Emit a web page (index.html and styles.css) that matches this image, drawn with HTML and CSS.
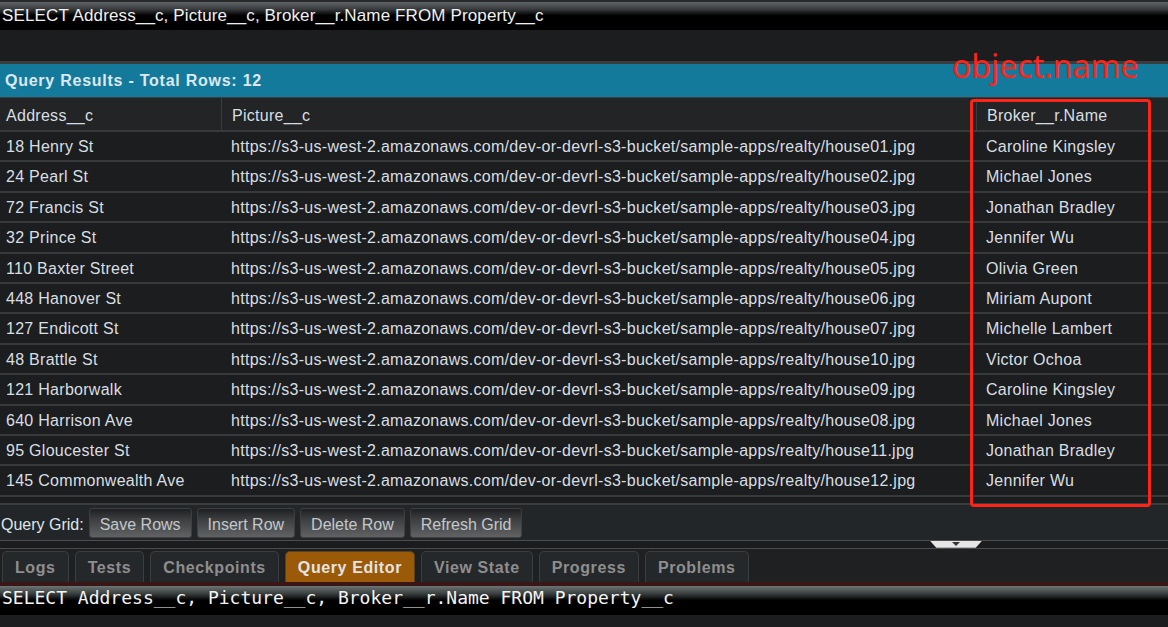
FILE: index.html
```html
<!DOCTYPE html>
<html>
<head>
<meta charset="utf-8">
<link rel="stylesheet" href="styles.css">
</head>
<body>
<div class="page">
  <div class="topquery">SELECT Address__c, Picture__c, Broker__r.Name FROM Property__c</div>
  <div class="blank"></div>
  <div class="title">Query Results - Total Rows: 12</div>
  <div class="grid">
    <div class="row head">
      <div class="c1">Address__c</div>
      <div class="c2">Picture__c</div>
      <div class="c3">Broker__r.Name</div>
    </div>
    <div class="row"><div class="c1">18 Henry St</div><div class="c2">https://s3-us-west-2.amazonaws.com/dev-or-devrl-s3-bucket/sample-apps/realty/house01.jpg</div><div class="c3">Caroline Kingsley</div></div>
    <div class="row"><div class="c1">24 Pearl St</div><div class="c2">https://s3-us-west-2.amazonaws.com/dev-or-devrl-s3-bucket/sample-apps/realty/house02.jpg</div><div class="c3">Michael Jones</div></div>
    <div class="row"><div class="c1">72 Francis St</div><div class="c2">https://s3-us-west-2.amazonaws.com/dev-or-devrl-s3-bucket/sample-apps/realty/house03.jpg</div><div class="c3">Jonathan Bradley</div></div>
    <div class="row"><div class="c1">32 Prince St</div><div class="c2">https://s3-us-west-2.amazonaws.com/dev-or-devrl-s3-bucket/sample-apps/realty/house04.jpg</div><div class="c3">Jennifer Wu</div></div>
    <div class="row"><div class="c1">110 Baxter Street</div><div class="c2">https://s3-us-west-2.amazonaws.com/dev-or-devrl-s3-bucket/sample-apps/realty/house05.jpg</div><div class="c3">Olivia Green</div></div>
    <div class="row"><div class="c1">448 Hanover St</div><div class="c2">https://s3-us-west-2.amazonaws.com/dev-or-devrl-s3-bucket/sample-apps/realty/house06.jpg</div><div class="c3">Miriam Aupont</div></div>
    <div class="row"><div class="c1">127 Endicott St</div><div class="c2">https://s3-us-west-2.amazonaws.com/dev-or-devrl-s3-bucket/sample-apps/realty/house07.jpg</div><div class="c3">Michelle Lambert</div></div>
    <div class="row"><div class="c1">48 Brattle St</div><div class="c2">https://s3-us-west-2.amazonaws.com/dev-or-devrl-s3-bucket/sample-apps/realty/house10.jpg</div><div class="c3">Victor Ochoa</div></div>
    <div class="row"><div class="c1">121 Harborwalk</div><div class="c2">https://s3-us-west-2.amazonaws.com/dev-or-devrl-s3-bucket/sample-apps/realty/house09.jpg</div><div class="c3">Caroline Kingsley</div></div>
    <div class="row"><div class="c1">640 Harrison Ave</div><div class="c2">https://s3-us-west-2.amazonaws.com/dev-or-devrl-s3-bucket/sample-apps/realty/house08.jpg</div><div class="c3">Michael Jones</div></div>
    <div class="row"><div class="c1">95 Gloucester St</div><div class="c2">https://s3-us-west-2.amazonaws.com/dev-or-devrl-s3-bucket/sample-apps/realty/house11.jpg</div><div class="c3">Jonathan Bradley</div></div>
    <div class="row"><div class="c1">145 Commonwealth Ave</div><div class="c2">https://s3-us-west-2.amazonaws.com/dev-or-devrl-s3-bucket/sample-apps/realty/house12.jpg</div><div class="c3">Jennifer Wu</div></div>
  </div>
  <div class="gridgap"></div>
  <div class="toolbar">
    <span class="label">Query Grid:</span>
    <button class="btn">Save Rows</button>
    <button class="btn">Insert Row</button>
    <button class="btn">Delete Row</button>
    <button class="btn">Refresh Grid</button>
  </div>
  <div class="splitter"><div class="handle"><span class="arrow"></span></div></div>
  <div class="tabs">
    <div class="tab">Logs</div>
    <div class="tab">Tests</div>
    <div class="tab">Checkpoints</div>
    <div class="tab active">Query Editor</div>
    <div class="tab">View State</div>
    <div class="tab">Progress</div>
    <div class="tab">Problems</div>
  </div>
  <div class="tabline"></div>
  <div class="editor">SELECT Address__c, Picture__c, Broker__r.Name FROM Property__c</div>
  <div class="footer"></div>

  <div class="annot-text">object.name</div>
  <div class="annot-box"></div>
</div>
</body>
</html>
```

FILE: styles.css
```css
* { box-sizing: border-box; }
html, body { margin: 0; padding: 0; }
body {
  background: #1c1d1f;
  font-family: Tahoma, "Liberation Sans", Arial, sans-serif;
  color: #d8dfe2;
  width: 1168px;
  height: 627px;
  overflow: hidden;
}
.page { position: relative; width: 1168px; height: 627px; }

.topquery {
  height: 30px;
  padding: 3px 0 0 2px;
  font-size: 17px;
  line-height: 22px;
  letter-spacing: 0.13px;
  color: #f0f0f0;
  border-top: 2px solid #2a2a2c;
  background: linear-gradient(to bottom, #5f6466 0%, #3a3d3f 25%, #000 48%, #000 100%);
  white-space: nowrap;
}
.blank {
  height: 34px;
  background: #1c1d1f;
  border-bottom: 3px solid #3a3c3e;
}
.title {
  height: 34px;
  background: #147a9c;
  color: #dce8ee;
  font-weight: bold;
  font-size: 16px;
  letter-spacing: 0.75px;
  line-height: 34px;
  padding-left: 5px;
  border-bottom: 1px solid #3a3c3e;
}
.grid { background: #1c1d1f; }
.row {
  display: flex;
  height: 30.4px;
  border-bottom: 2px solid #38393b;
  font-size: 16px;
  letter-spacing: 0.28px;
  line-height: 30px;
  white-space: nowrap;
}
.row.head {
  height: 34px;
  line-height: 36px;
  background: #222426;
}
.c1 { width: 221px; padding-left: 6px; }
.c2 { width: 755px; padding-left: 10px; }
.c3 { flex: 1; padding-left: 10px; }
.head .c2, .head .c3 { border-left: 1px solid #3a3c3e; }

.gridgap {
  height: 8px;
  background: #1c1d1f;
  border-bottom: 2px solid #3a3c3e;
}
.toolbar {
  height: 35px;
  background: #232628;
  display: flex;
  align-items: flex-start;
  gap: 5px;
  padding-top: 3px;
}
.label {
  font-size: 16px;
  color: #dfe6ea;
  padding-left: 1px;
  line-height: 34px;
}
.btn {
  height: 30px;
  font-family: inherit;
  font-size: 16px;
  color: #c2c8cc;
  padding: 4px 10px 0;
  border: 1px solid #3d3f41;
  border-radius: 3px;
  background: linear-gradient(to bottom, #1e1f20 0%, #3c3d3e 35%, #606263 100%);
  line-height: 24px;
}
.splitter {
  height: 9px;
  background: #1b1c1e;
  border-top: 1px solid #4a4c4e;
  border-bottom: 1px solid #4a4c4e;
  position: relative;
}
.handle {
  position: absolute;
  left: 930px;
  top: 0;
  width: 52px;
  height: 7px;
  background: #e6e6e6;
  clip-path: polygon(0 0, 100% 0, 88% 100%, 12% 100%);
}
.arrow {
  position: absolute;
  left: 22px;
  top: 1px;
  width: 0;
  height: 0;
  border-left: 4px solid transparent;
  border-right: 4px solid transparent;
  border-top: 4px solid #333;
}
.tabs {
  height: 33px;
  background: #1f2022;
  display: flex;
  align-items: flex-end;
  gap: 6px;
  padding-left: 2px;
}
.tab {
  height: 31px;
  padding: 1px 12px 0;
  font-size: 16px;
  font-weight: bold;
  letter-spacing: 0.6px;
  color: #8e8e8e;
  background: #25282a;
  border: 1px solid #3b3e41;
  border-bottom: none;
  border-radius: 5px 5px 0 0;
  line-height: 30px;
}
.tab.active {
  background: #9a5a08;
  color: #e4e4e4;
  border-color: #5a4020;
}
.tabline {
  height: 4px;
  background: #3a1616;
}
.editor {
  height: 29px;
  font-family: "DejaVu Sans Mono", monospace;
  font-size: 18px;
  line-height: 24px;
  padding-left: 2px;
  color: #f4f4f4;
  background: linear-gradient(to bottom, #6d7474 0%, #3c4242 25%, #000 50%, #000 100%);
  white-space: nowrap;
}
.footer {
  height: 12px;
  background: #1c1d1f;
}

.annot-text {
  position: absolute;
  left: 952px;
  top: 46px;
  font-family: "Noto Sans", "Liberation Sans", sans-serif;
  font-size: 32px;
  line-height: 40px;
  color: #ff2418;
}
.annot-box {
  position: absolute;
  left: 970px;
  top: 99px;
  width: 181px;
  height: 408px;
  border: 3px solid #ff2418;
  border-radius: 4px;
}
```
